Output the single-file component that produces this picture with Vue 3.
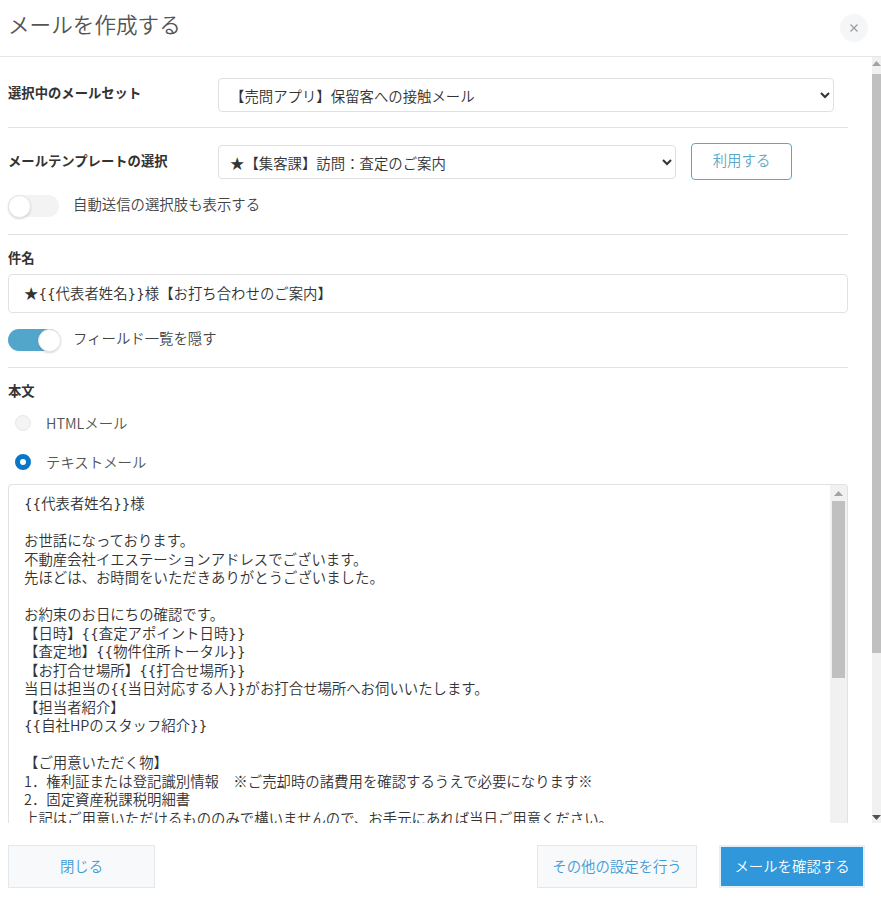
<script setup>
const subject = '★{{代表者姓名}}様【お打ち合わせのご案内】'
const bodyLines = [
  '{{代表者姓名}}様', '', 'お世話になっております。', '不動産会社イエステーションアドレスでございます。',
  '先ほどは、お時間をいただきありがとうございました。', '', 'お約束のお日にちの確認です。',
  '【日時】{{査定アポイント日時}}', '【査定地】{{物件住所トータル}}', '【お打合せ場所】{{打合せ場所}}',
  '当日は担当の{{当日対応する人}}がお打合せ場所へお伺いいたします。', '【担当者紹介】', '{{自社HPのスタッフ紹介}}', '',
  '【ご用意いただく物】', '1．権利証または登記識別情報　※ご売却時の諸費用を確認するうえで必要になります※', '2．固定資産税課税明細書',
  '上記はご用意いただけるもののみで構いませんので、お手元にあれば当日ご用意ください。'
]
const parts = (line) => line.split(/([{}]+)/).filter(Boolean)
const isBrace = (part) => part[0] === '{' || part[0] === '}'
</script>

<template>
  <div class="modal">
    <header class="head">
      <h1 class="title">メールを作成する</h1>
      <button class="close" type="button" aria-label="閉じる">
        <svg width="10" height="10" viewBox="0 0 10 10"><path d="M1.5 1.5l7 7M8.5 1.5l-7 7" stroke="#9a9ea3" stroke-width="1.3" fill="none"/></svg>
      </button>
    </header>

    <div class="middle">
      <main class="content">
        <section class="row first">
          <label class="label side">選択中のメールセット</label>
          <select class="sel set"><option>【売問アプリ】保留客への接触メール</option></select>
        </section>
        <hr class="rule r1" />
        <section class="row second">
          <label class="label side">メールテンプレートの選択</label>
          <select class="sel tpl"><option>★【集客課】訪問：査定のご案内</option></select>
          <button class="use" type="button">利用する</button>
        </section>
        <div class="switch-row sw1">
          <span class="switch"><span class="knob"></span></span>
          <span class="switch-text">自動送信の選択肢も表示する</span>
        </div>
        <hr class="rule r2" />
        <label class="label block l1">件名</label>
        <div class="subject"><span v-for="(p, j) in parts(subject)" :key="j" :class="{ brace: isBrace(p) }">{{ p }}</span></div>
        <div class="switch-row sw2">
          <span class="switch on"><span class="knob"></span></span>
          <span class="switch-text">フィールド一覧を隠す</span>
        </div>
        <hr class="rule r3" />
        <label class="label block l2">本文</label>
        <div class="radio r-html"><span class="dot"></span><span>HTMLメール</span></div>
        <div class="radio r-text"><span class="dot checked"></span><span>テキストメール</span></div>
        <div class="editor">
          <div class="editor-text">
            <div v-for="(line, i) in bodyLines" :key="i" class="line"><span v-for="(p, j) in parts(line)" :key="j" :class="{ brace: isBrace(p) }">{{ p }}</span></div>
          </div>
          <div class="bar inner">
            <svg class="arrow" width="9" height="5" viewBox="0 0 9 5"><path d="M4.5 0L9 5H0z" fill="#a3a3a3"/></svg>
            <div class="thumb"></div>
          </div>
        </div>
      </main>
      <aside class="bar outer">
        <svg class="arrow" width="9" height="5" viewBox="0 0 9 5"><path d="M4.5 0L9 5H0z" fill="#a3a3a3"/></svg>
        <div class="thumb"></div>
        <svg class="arrow down" width="9" height="5" viewBox="0 0 9 5"><path d="M0 0H9L4.5 5z" fill="#505050"/></svg>
      </aside>
    </div>

    <footer class="foot">
      <button class="btn ghost close-btn" type="button">閉じる</button>
      <span class="spacer"></span>
      <button class="btn ghost other" type="button">その他の設定を行う</button>
      <button class="btn primary" type="button">メールを確認する</button>
    </footer>
  </div>
</template>

<style>
html, body { margin: 0; background: #fff; }
</style>

<style scoped>
.modal {
  width: 881px; height: 908px; display: flex; flex-direction: column; overflow: hidden; background: #fff;
  font-family: "Noto Sans CJK JP", "Noto Sans", sans-serif; font-size: 14.4px; font-weight: 350; color: #333;
}
.head { flex: none; display: flex; align-items: center; justify-content: space-between; padding: 0 13px 4px 8px; box-sizing: border-box; border-bottom: 1px solid #e6e6e6; height: 57px; }
.title { margin: 0 0 4px; font-size: 21.6px; font-weight: 350; color: #555; line-height: 50px; }
.close { width: 28px; height: 28px; border: 0; border-radius: 50%; background: #f5f6f7; padding: 0; display: flex; align-items: center; justify-content: center; margin-top: 4px; }
.middle { height: 766px; flex: none; display: flex; overflow: hidden; }
.content { flex: 1; padding: 0 24px 0 8px; min-width: 0; }
.rule { border: 0; border-top: 1px solid #e2e2e2; margin: 0; }
.row { display: flex; align-items: flex-start; }
.first { padding-top: 21px; }
.first .side { padding-top: 5px; }
.second { padding-top: 17px; }
.label { font-weight: 700; font-size: 13.33px; color: #333; line-height: 20px; }
.side { width: 210px; flex: none; padding-top: 6px; }
.sel {
  height: 34px; box-sizing: border-box; border: 1px solid #e0e0e0; border-radius: 4px; background: #fff;
  font: inherit; color: #333; padding: 0 7px; line-height: 32px;
}
.set { width: 616px; }
.tpl { width: 458px; }
.r1 { margin-top: 15px; }
.use {
  margin-left: 15px; margin-top: -2px; width: 101px; height: 37px; border: 1px solid #5aa7c9; border-radius: 4px; background: #fff;
  color: #5aa7c9; font: inherit; padding: 0 0 4px;
}
.switch-row { display: flex; align-items: center; gap: 13px; height: 24px; }
.sw1 { margin-top: 12px; gap: 14px; }
.sw2 { margin-top: 13px; }
.switch { width: 51px; height: 22px; margin-top: 3px; border-radius: 11px; background: #f3f3f3; position: relative; flex: none; }
.switch.on { width: 52px; background: #52a6cc; }
.knob { position: absolute; left: 0; top: 0; width: 21px; height: 21px; border-radius: 50%; background: #fff; border: 1px solid #e4e4e4; box-shadow: 0 1px 2px rgba(0,0,0,.15); }
.on .knob { left: 30px; }
.switch-text { color: #444; line-height: 24px; }
.r2 { margin-top: 18px; }
.block { display: block; }
.l1 { margin-top: 13px; }
.subject { margin-top: 6px; height: 39px; box-sizing: border-box; border: 1px solid #e2e2e2; border-radius: 4px; padding: 0 15px; line-height: 35px; color: #333; }
.brace { font-family: "DejaVu Sans", sans-serif; font-size: 13.5px; font-weight: 400; line-height: 1; }
.r3 { margin-top: 17px; }
.l2 { margin-top: 13px; }
.radio { display: flex; align-items: center; gap: 15px; height: 24px; padding-left: 7px; color: #555; }
.r-html { margin-top: 9px; }
.r-text { margin-top: 15px; }
.dot { width: 16px; height: 16px; margin-top: 2px; border-radius: 50%; background: #f4f4f4; border: 1px solid #e8e8e8; box-sizing: border-box; flex: none; }
.dot.checked { background: #fff; border: 5px solid #0a76c8; }
.editor { margin-top: 11px; height: 360px; border: 1px solid #e2e2e2; border-bottom: 0; border-radius: 4px 4px 0 0; box-sizing: border-box; position: relative; display: flex; overflow: hidden; }
.editor-text { flex: 1; padding: 9px 15px 0; line-height: 18.5px; color: #333; overflow: hidden; }
.line { height: 18.5px; white-space: nowrap; }
.bar { background: #f1f1f1; flex: none; position: relative; display: flex; flex-direction: column; align-items: center; }
.inner { width: 17px; }
.inner .arrow { margin-top: 6px; }
.inner .thumb { width: 13px; height: 177px; margin-top: 5px; background: #c0c0c0; }
.outer { width: 9px; }
.outer .arrow { margin-top: 4px; flex: none; }
.outer .thumb { width: 9px; height: 579px; margin-top: 8px; background: #c0c0c0; }
.down { position: absolute; bottom: 3px; margin: 0; }
.foot { flex: 1; display: flex; align-items: flex-start; padding: 22px 16px 0 8px; }
.spacer { flex: 1; }
.btn { height: 43px; font: inherit; padding: 0 0 2px; box-sizing: border-box; }
.ghost { background: #f7f9fa; border: 1px solid #e5e8ea; color: #3f9bd6; }
.close-btn { width: 147px; }
.other { width: 160px; margin-right: 22px; }
.primary { width: 146px; background: #2f97da; border: 2px solid #e4f0f8; color: #fff; }
</style>
